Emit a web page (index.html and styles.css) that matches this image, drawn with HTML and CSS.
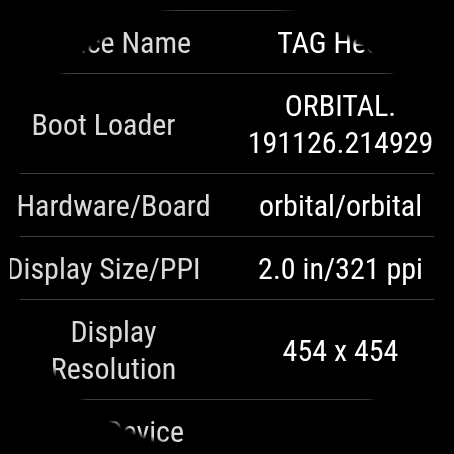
FILE: index.html
```html
<!DOCTYPE html>
<html>
  <head>
    <meta charset="utf-8">
    <title>Hardware info</title>
    <link rel="stylesheet" href="styles.css">
  </head>
  <body>
    <div class="screen">
      <div class="list">
        <div class="row">
          <div class="label"><span>Model</span></div>
          <div class="value"><span>Connected</span></div>
        </div>
        <div class="row">
          <div class="label"><span>Device Name</span></div>
          <div class="value"><span>TAG Heuer</span></div>
        </div>
        <div class="row">
          <div class="label shift"><span>Boot Loader</span></div>
          <div class="value"><span>ORBITAL.<br>191126.214929</span></div>
        </div>
        <div class="row">
          <div class="label"><span>Hardware/Board</span></div>
          <div class="value"><span>orbital/orbital</span></div>
        </div>
        <div class="row">
          <div class="label shift"><span>Display Size/PPI</span></div>
          <div class="value"><span>2.0 in/321 ppi</span></div>
        </div>
        <div class="row">
          <div class="label wrap"><span>Display Resolution</span></div>
          <div class="value"><span>454 x 454</span></div>
        </div>
        <div class="row">
          <div class="label wrap shift"><span>Paired Device Name</span></div>
          <div class="value"><span>1.0.2</span></div>
        </div>
      </div>
    </div>
  </body>
</html>
```

FILE: styles.css
```css
html, body {
  margin: 0;
  padding: 0;
  background-color: #000;
}

.screen {
  width: 454px;
  height: 454px;
  overflow: hidden;
  background-color: #000;
  -webkit-mask-image: radial-gradient(circle 240px at 227px 227px, #000 222px, transparent 228px);
  mask-image: radial-gradient(circle 240px at 227px 227px, #000 222px, transparent 228px);
}

.list {
  margin: -52px 10px 0 10px;
  overflow: hidden;
  font-family: Roboto, "Noto Sans", sans-serif;
  font-size: 30px;
  font-stretch: 87.5%;
  line-height: 37px;
}

.row {
  display: grid;
  grid-template-columns: minmax(0, 1fr) minmax(0, 1fr);
  column-gap: 40px;
  margin: 0 10px;
  padding: 13px 0 12px 0;
  border-bottom: 1px solid #3c3c3c;
}

.label, .value {
  display: flex;
  justify-content: center;
  align-items: center;
  text-align: center;
}

.label span, .value span {
  flex: none;
  white-space: nowrap;
}

.label {
  color: #dadada;
}

.label.shift {
  padding-right: 20px;
}

.label.wrap span {
  flex: 0 1 auto;
  white-space: normal;
}

.value {
  color: #fff;
}
```
